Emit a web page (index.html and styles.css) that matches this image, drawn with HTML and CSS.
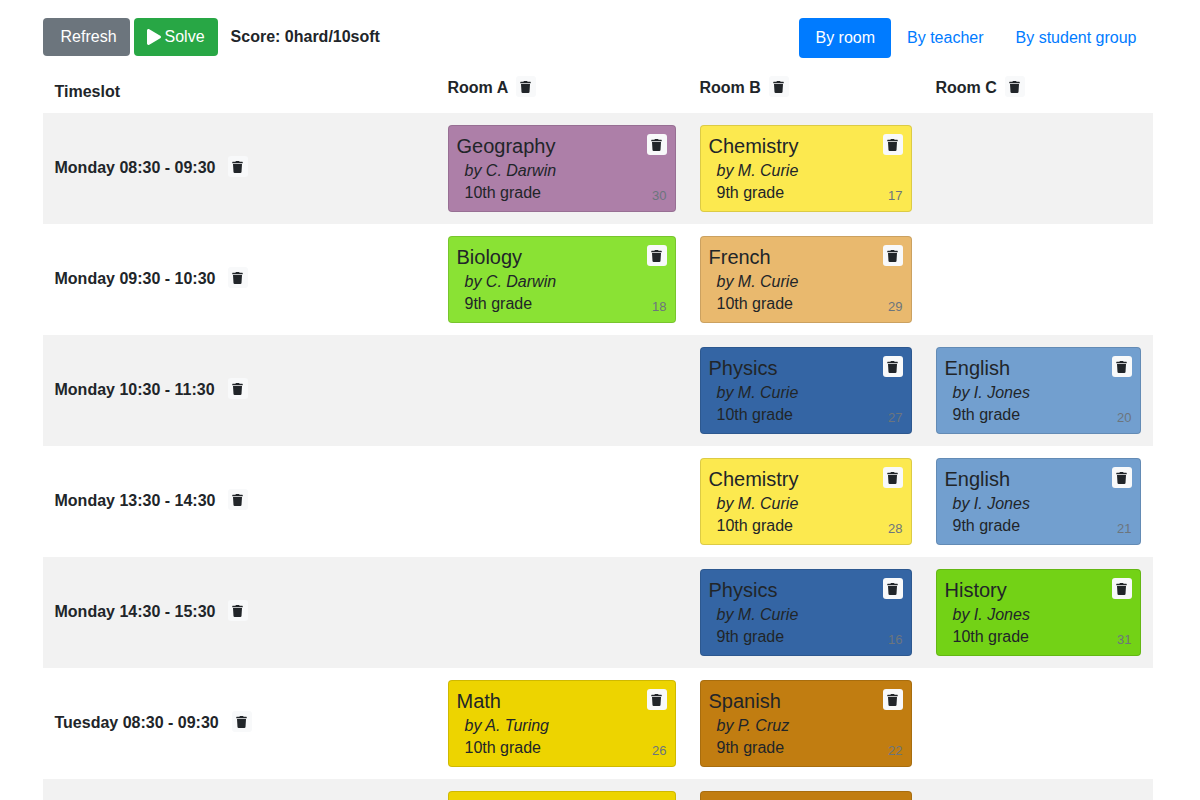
FILE: index.html
```html
<!DOCTYPE html>
<html lang="en">
<head>
<meta charset="utf-8">
<meta name="viewport" content="width=device-width, initial-scale=1">
<title>School timetable</title>
<link rel="stylesheet" href="styles.css">
</head>
<body>
<svg class="sprite" aria-hidden="true">
  <symbol id="trash" viewBox="0 0 448 512">
    <path d="M432 32H312l-9.400-18.700A24 24 0 0 0 281.100 0H166.800a23.700 23.700 0 0 0-21.400 13.300L136 32H16A16 16 0 0 0 0 48v32a16 16 0 0 0 16 16h416a16 16 0 0 0 16-16V48a16 16 0 0 0-16-16zM53.200 467a48 48 0 0 0 47.900 45h245.800a48 48 0 0 0 47.900-45L416 128H32z"/>
  </symbol>
</svg>
<main class="container">
  <header class="toolbar">
    <div class="actions">
      <button type="button" class="btn btn-refresh">Refresh</button>
      <button type="button" class="btn btn-solve"><svg class="play" viewBox="0 0 448 512" aria-hidden="true"><path d="M424.400 214.700L72.400 6.600C43.800-10.300 0 6.100 0 47.900V464c0 37.500 40.700 60.100 72.400 41.300l352-208c31.400-18.500 31.500-64.100 0-82.600z"/></svg>Solve</button>
      <span class="score">Score: 0hard/10soft</span>
    </div>
    <nav class="tabs">
      <a class="tab active" href="#room">By room</a>
      <a class="tab" href="#teacher">By teacher</a>
      <a class="tab" href="#group">By student group</a>
    </nav>
  </header>
  <table class="timetable">
    <colgroup><col class="col-slot"><col class="col-a"><col class="col-b"><col class="col-c"></colgroup>
    <thead>
      <tr id="rooms"><th scope="col">Timeslot</th></tr>
    </thead>
    <tbody id="slots"></tbody>
  </table>
</main>
<script src="app.js"></script>
</body>
</html>
```

FILE: styles.css
```css
* { box-sizing: border-box; }

body {
  margin: 0;
  padding: 18px 5px 0 0;
  background: #fff;
  color: #212529;
  font-family: "Liberation Sans", Arial, sans-serif;
  font-size: 16px;
  line-height: 24px;
  overflow-x: hidden;
}

.sprite { position: absolute; width: 0; height: 0; }

.container {
  max-width: 1140px;
  margin: 0 auto;
  padding: 0 15px;
}

.toolbar {
  display: flex;
  justify-content: space-between;
  align-items: flex-start;
  margin-bottom: 6px;
}

.actions { display: flex; align-items: center; gap: 4px; }

.btn {
  display: flex;
  align-items: center;
  gap: 4px;
  padding: 6px 12px;
  border: 1px solid transparent;
  border-radius: 4px;
  color: #fff;
  font: inherit;
  cursor: pointer;
}
.btn-refresh { padding-left: 17px; background: #6c757d; }
.btn-solve { background: #28a745; }
.play { width: 14px; height: 16px; fill: currentColor; }

.score { margin-left: 9px; font-weight: bold; }

.tabs { display: flex; }
.tab {
  padding: 8px 16px;
  border-radius: 4px;
  color: #007bff;
  text-decoration: none;
}
.tab.active { background: #007bff; color: #fff; }

.timetable {
  width: 100%;
  table-layout: fixed;
  border-collapse: collapse;
}
.col-slot { width: 393px; }
.col-a { width: 252px; }
.col-b { width: 236px; }
.col-c { width: 229px; }

th, td { padding: 12px; text-align: left; vertical-align: middle; }
thead th { padding-bottom: 9px; vertical-align: bottom; }
tbody tr:nth-child(odd) { background: #f2f2f2; }

.label {
  display: flex;
  align-items: flex-start;
  gap: 8px;
  padding-bottom: 4px;
}
tbody .label { gap: 13px; padding-bottom: 2px; }

.trash {
  display: flex;
  align-items: center;
  justify-content: center;
  padding: 5px 5px 4px 4px;
  border: 0;
  border-radius: 3px;
  background: #f8f9fa;
  color: #212529;
  cursor: pointer;
}
.trash svg { width: 11px; height: 12px; fill: currentColor; }

.card {
  display: flex;
  justify-content: space-between;
  padding: 8px 8px 7px;
  border: 1px solid rgba(0, 0, 0, 0.125);
  border-radius: 4px;
}
.card h2 { margin: 0 0 1px; font-size: 20px; font-weight: normal; line-height: 25px; }
.card p { margin: 0 0 0 8px; line-height: 22px; }
.card .teacher { font-style: italic; }
.card-side {
  display: flex;
  flex-direction: column;
  justify-content: space-between;
  align-items: flex-end;
}
.card-id { color: #6c757d; font-size: 13px; line-height: 16px; }

.geography { background-color: #ad7fa8; }
.chemistry { background-color: #fce94f; }
.biology { background-color: #8ae234; }
.french { background-color: #e9b96e; }
.physics { background-color: #3465a4; }
.english { background-color: #729fcf; }
.history { background-color: #73d216; }
.math { background-color: #edd400; }
.spanish { background-color: #c17d11; }
```

FILE: app.js
```js
const rooms = ["Room A", "Room B", "Room C"];

// Each slot: label, then one lesson (or null) per room.
const slots = [
  ["Monday 08:30 - 09:30", ["Geography", "C. Darwin", "10th grade", 30], ["Chemistry", "M. Curie", "9th grade", 17], null],
  ["Monday 09:30 - 10:30", ["Biology", "C. Darwin", "9th grade", 18], ["French", "M. Curie", "10th grade", 29], null],
  ["Monday 10:30 - 11:30", null, ["Physics", "M. Curie", "10th grade", 27], ["English", "I. Jones", "9th grade", 20]],
  ["Monday 13:30 - 14:30", null, ["Chemistry", "M. Curie", "10th grade", 28], ["English", "I. Jones", "9th grade", 21]],
  ["Monday 14:30 - 15:30", null, ["Physics", "M. Curie", "9th grade", 16], ["History", "I. Jones", "10th grade", 31]],
  ["Tuesday 08:30 - 09:30", ["Math", "A. Turing", "10th grade", 26], ["Spanish", "P. Cruz", "9th grade", 22], null],
  ["Tuesday 09:30 - 10:30", ["Math", "A. Turing", "10th grade", 25], ["Spanish", "P. Cruz", "9th grade", 23], null]
];

const trash = (name) =>
  `<button type="button" class="trash" aria-label="Delete ${name}"><svg aria-hidden="true"><use href="#trash"/></svg></button>`;

const label = (text) => `<div class="label"><span>${text}</span>${trash(text)}</div>`;

const card = ([subject, teacher, group, id]) => `
  <article class="card ${subject.toLowerCase()}">
    <div>
      <h2>${subject}</h2>
      <p class="teacher">by ${teacher}</p>
      <p>${group}</p>
    </div>
    <div class="card-side">${trash(subject)}<span class="card-id">${id}</span></div>
  </article>`;

document.getElementById("rooms").insertAdjacentHTML("beforeend",
  rooms.map((room) => `<th scope="col">${label(room)}</th>`).join(""));

document.getElementById("slots").innerHTML = slots.map(([time, ...lessons]) =>
  `<tr><th scope="row">${label(time)}</th>${lessons.map((lesson) => `<td>${lesson ? card(lesson) : ""}</td>`).join("")}</tr>`
).join("");
```
